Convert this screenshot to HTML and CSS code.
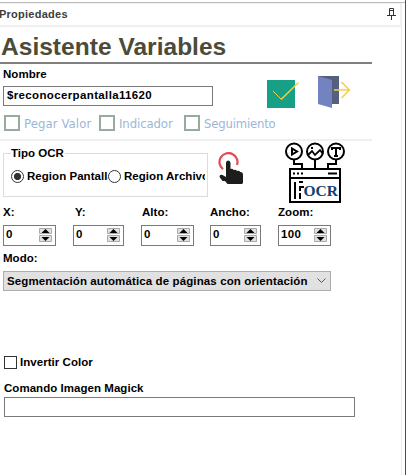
FILE: index.html
```html
<!DOCTYPE html>
<html lang="es">
<head>
<meta charset="utf-8">
<title>Propiedades</title>
<link rel="stylesheet" href="styles.css">
</head>
<body>
<div class="window">
  <div class="panel">
    <header class="caption">
      <span class="caption-text">Propiedades</span>
      <svg class="pin" width="10" height="13" viewBox="0 0 10 13" fill="none" stroke="#333"><path d="M2.500 8V.500h4V8M2.500 2.500h4M0 7.500h9M4.500 8v4"/></svg>
    </header>
    <main class="content">
      <h1 class="title">Asistente Variables</h1>
      <section class="name-row">
        <div class="name-field">
          <div class="label t-nombre">Nombre</div>
          <div class="textbox"><span class="t-value">$reconocerpantalla11620</span></div>
        </div>
        <svg class="ok" width="33" height="29" viewBox="0 0 33 29" fill="none"><path fill="#16a085" d="M0 1h28v28H0z"/><path stroke="#f3cf4b" d="M6 12l8 8"/><path stroke="#f3cf4b" stroke-width="1.500" d="M14 20.500L31.500 3.500"/></svg>
        <svg class="exit" width="33" height="33" viewBox="0 0 33 33" fill="none"><path fill="#556080" d="M0 0h21v28H0z"/><path fill="#7383bf" d="M0 0l14 4v28L0 28z"/><path stroke="#f3cf4b" stroke-width="1.500" d="M16 14h15M23.500 6l8 8-8 8"/></svg>
      </section>
      <section class="options">
        <span class="opt o1"><i></i><b>Pegar Valor</b></span>
        <span class="opt o2"><i></i><b>Indicador</b></span>
        <span class="opt o3"><i></i><b>Seguimiento</b></span>
      </section>
      <section class="type-row">
        <div class="group">
          <div class="legend">Tipo OCR</div>
          <div class="radios">
            <span class="radio on"><i></i><b>Region Pantalla</b></span>
            <span class="radio"><i></i><b>Region Archivo</b></span>
          </div>
        </div>
        <svg class="hand" width="26" height="33" viewBox="0 0 26 33"><path d="M5 17.200A9 9 0 1 1 19 13" fill="none" stroke="#e64a50" stroke-width="2.200"/><path fill="#1d1d1b" d="M8 11q0-2.500 2.200-2.500T12.500 11v6q2-1 3 1 2.500-1 3.500 1 2.500-1 3 1 3-.500 3 2.500V31l-1 1H9.500L7 29H4.500L1.500 25q0-3 3-2L8 25z"/></svg>
        <svg class="ocr" width="62" height="62" viewBox="0 0 62 62" fill="none" stroke="#000" stroke-width="2">
          <circle cx="10" cy="9.500" r="8"/><circle cx="31" cy="9.500" r="8"/><circle cx="52" cy="9.500" r="8"/>
          <path d="M8 6.500v6l5-3zM10 18v4h8v5M31 18v9M52 18v4h-8v5"/>
          <path stroke-width="1.800" d="M24 13l4-4 3 4 5-5 3 4"/><path stroke-width="2" d="M27 6h2"/>
          <path d="M48 8V6h8v2M52 6v8M50 14h4"/>
          <path d="M6 27h50v33H6zM6 36h50"/><path stroke-dasharray="2 2" d="M9 31.500h11"/><path d="M44 31.500h9M11 40v17"/><path d="M15 40h4M16 44v5M16 51v6M17 45h3"/>
          <text class="ocr-text" x="19.500" y="54">OCR</text>
        </svg>
      </section>
      <section class="numbers">
        <div class="num n1"><div class="label">X:</div><div class="spin"><span>0</span><svg width="13" height="14"><use href="#arrows"/></svg></div></div>
        <div class="num n2"><div class="label">Y:</div><div class="spin"><span>0</span><svg width="13" height="14"><use href="#arrows"/></svg></div></div>
        <div class="num n3"><div class="label">Alto:</div><div class="spin"><span>0</span><svg width="13" height="14"><use href="#arrows"/></svg></div></div>
        <div class="num n4"><div class="label">Ancho:</div><div class="spin"><span>0</span><svg width="13" height="14"><use href="#arrows"/></svg></div></div>
        <div class="num n5"><div class="label">Zoom:</div><div class="spin"><span>100</span><svg width="13" height="14"><use href="#arrows"/></svg></div></div>
      </section>
      <div class="label t-modo">Modo:</div>
      <div class="select"><span class="t-select">Segmentación automática de páginas con orientación</span><svg width="9" height="6" fill="none" stroke="#555"><path d="M.500 .500l4 4 4-4"/></svg></div>
      <div class="invert"><i></i><span class="t-invert">Invertir Color</span></div>
      <div class="label t-command">Comando Imagen Magick</div>
      <div class="textbox command"></div>
    </main>
  </div>
</div>
<svg width="0" height="0"><defs><g id="arrows"><path fill="#e1e1e1" stroke="#aaa" d="M.500 .500h12v5H.500zM.500 7.500h12v6H.500z"/><path d="M2.500 5l4-4 4 4zM2.500 9h8l-4 4z"/></g></defs></svg>
</body>
</html>
```
FILE: styles.css
```css
* { box-sizing: border-box; }
body { margin: 0; width: 406px; height: 475px; overflow: hidden; background: #fff; color: #000; font: bold 11.5px/14px "Liberation Sans", Arial, sans-serif; letter-spacing: .04px; }
i, b { font-style: normal; font-weight: inherit; }
svg { display: block; flex: none; }
.window { height: 475px; padding-top: 2px; border-right: 1px solid #0f6296; }
.panel { width: 405px; height: 473px; border-top: 1px solid #bcbcbc; background: linear-gradient(#e9edf2, #e9edf2) 401px 0 / 1px 100% no-repeat; }
.caption { display: flex; justify-content: space-between; width: 402px; height: 24px; border-top: 1px solid #eee; border-bottom: 2px solid #f0f0f0; border-right: 2px solid #f0f0f0; padding: 3px 4px 0 0; color: #3c3c3c; }
.caption-text { margin-left: -1px; font-size: 11px; letter-spacing: .25px; }
.pin { margin: 1px -1px 0 0; }
.content { width: 372px; }
.title { margin: 0; height: 37px; border-bottom: 2px solid #808080; padding: 7px 0 0 1px; font-size: 24.5px; line-height: 26px; letter-spacing: .03px; color: #4d4b37; white-space: nowrap; }
.name-row { display: flex; height: 45px; padding-left: 3px; }
.name-field { width: 210px; padding-top: 3px; }
.name-field .textbox { margin-top: 5px; }
.textbox { height: 20px; border: 1px solid #7a7a7a; padding: 1px 3px; }
.t-value { letter-spacing: .36px; }
.ok { margin: 15px 0 0 54px; }
.exit { margin: 12px 0 0 18px; }
.options { display: flex; height: 32px; padding: 6px 0 0 4px; border-bottom: 2px solid #f0f0f0; font: 13px/18px "DejaVu Sans Condensed", "DejaVu Sans", sans-serif; font-stretch: condensed; letter-spacing: -.1px; color: #9cb7d6; }
.opt { display: flex; gap: 4px; white-space: nowrap; }
.opt i { width: 16px; height: 16px; border: 2px solid #97ac9f; }
.o1 { width: 95px; letter-spacing: .1px; }
.o2 { width: 85px; }
.o3 { letter-spacing: -.2px; }
.type-row { display: flex; height: 64px; padding-left: 3px; }
.group { width: 205px; height: 44px; margin-top: 12px; border: 1px solid #dcdcdc; }
.legend { width: 54px; height: 14px; margin: -8px 0 0 7px; background: #fff; letter-spacing: 0; white-space: nowrap; }
.radios { display: flex; padding: 9px 0 0 7px; }
.radio { display: flex; align-items: center; width: 97px; gap: 3px; overflow: hidden; white-space: nowrap; }
.radio b { overflow: hidden; }
.radio i { flex: none; width: 13px; height: 13px; border: 1px solid #333; border-radius: 50%; }
.radio.on i { background: radial-gradient(circle, #333 3.300px, #fff 3.900px); }
.hand { margin: 11px 0 0 10px; }
.ocr { margin: 1px 0 0 40px; }
.ocr-text { font: bold 15.5px "Liberation Serif", serif; letter-spacing: 0; fill: #123e70; stroke: none; }
.numbers { display: flex; height: 41px; padding-left: 3px; }
.n1 { width: 70px; }
.n2 { width: 68px; }
.n3 { width: 69px; }
.n4 { width: 68px; }
.n2 .label { padding-left: 2px; }
.n3 .label { padding-left: 1px; }
.spin { display: flex; justify-content: space-between; width: 51px; height: 21px; margin-top: 6px; border: 1px solid #7a7a7a; padding: 2px 3px 0 2px; letter-spacing: .3px; }
.spin span { margin-top: -1px; }
.n1 .spin, .n3 .spin, .n5 .spin { width: 53px; }
.t-modo { margin: 5px 0 0 3px; }
.select { display: flex; align-items: center; justify-content: space-between; width: 328px; height: 20px; margin: 6px 0 0 3px; padding: 0 4px 0 3px; border: 1px solid #adadad; background: #e1e1e1; letter-spacing: .12px; white-space: nowrap; }
.invert { display: flex; align-items: center; gap: 3px; margin: 65px 0 0 4px; height: 13px; }
.invert i { width: 13px; height: 13px; border: 1px solid #333; }
.t-invert { margin-top: -2px; }
.t-command { margin: 12px 0 0 4px; }
.command { width: 351px; margin: 2px 0 0 4px; }
```
